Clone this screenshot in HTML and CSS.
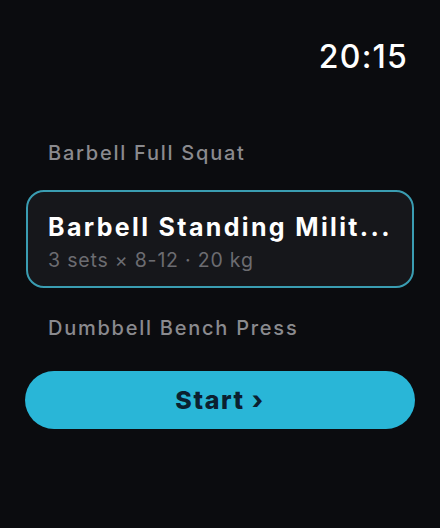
FILE: index.html
```html
<!DOCTYPE html>
<html>
<head>
<meta charset="utf-8">
<link rel="stylesheet" href="styles.css">
</head>
<body>
<div class="screen">
  <div class="status"><span class="time">20:15</span></div>
  <div class="list">
    <div class="item">Barbell Full Squat</div>
    <div class="card">
      <div class="card-title">Barbell Standing Milit...</div>
      <div class="card-sub">3 sets × 8-12 · 20 kg</div>
    </div>
    <div class="item item-next">Dumbbell Bench Press</div>
  </div>
  <button class="start">Start ›</button>
</div>
</body>
</html>
```
FILE: styles.css
```css
html, body {
  margin: 0;
  padding: 0;
  background: #0b0c0f;
}
.screen {
  width: 440px;
  height: 528px;
  box-sizing: border-box;
  padding: 41px 25px 0 25px;
  font-family: Inter, "Noto Sans", sans-serif;
  display: flex;
  flex-direction: column;
}
.status {
  display: flex;
  justify-content: flex-end;
  padding-right: 7px;
}
.time {
  color: #ffffff;
  font-size: 32px;
  line-height: 32px;
  font-weight: 500;
  letter-spacing: 1.2px;
}
.list {
  display: flex;
  flex-direction: column;
  margin-top: 68px;
}
.item {
  color: #8a8a8e;
  font-size: 20px;
  line-height: 24px;
  font-weight: 500;
  padding-left: 23px;
  letter-spacing: 1.75px;
}
.card {
  margin: 25px 1px 0 1px;
  border: 2px solid #3a9db2;
  border-radius: 18px;
  background: #16171b;
  padding: 20px 20px 14px 20px;
}
.card-title {
  color: #ffffff;
  font-size: 25px;
  line-height: 30px;
  font-weight: 700;
  letter-spacing: 2.35px;
  white-space: nowrap;
}
.card-sub {
  color: #6c6c71;
  font-size: 19.5px;
  line-height: 24px;
  margin-top: 6px;
  letter-spacing: 0.8px;
}
.item-next {
  margin-top: 28px;
}
.start {
  margin-top: 31px;
  height: 58px;
  border: none;
  border-radius: 29px;
  background: #29b6d7;
  color: #0b2030;
  font-family: Inter, "Noto Sans", sans-serif;
  font-size: 25px;
  font-weight: 800;
  letter-spacing: 1.6px;
  padding: 0;
}
```
